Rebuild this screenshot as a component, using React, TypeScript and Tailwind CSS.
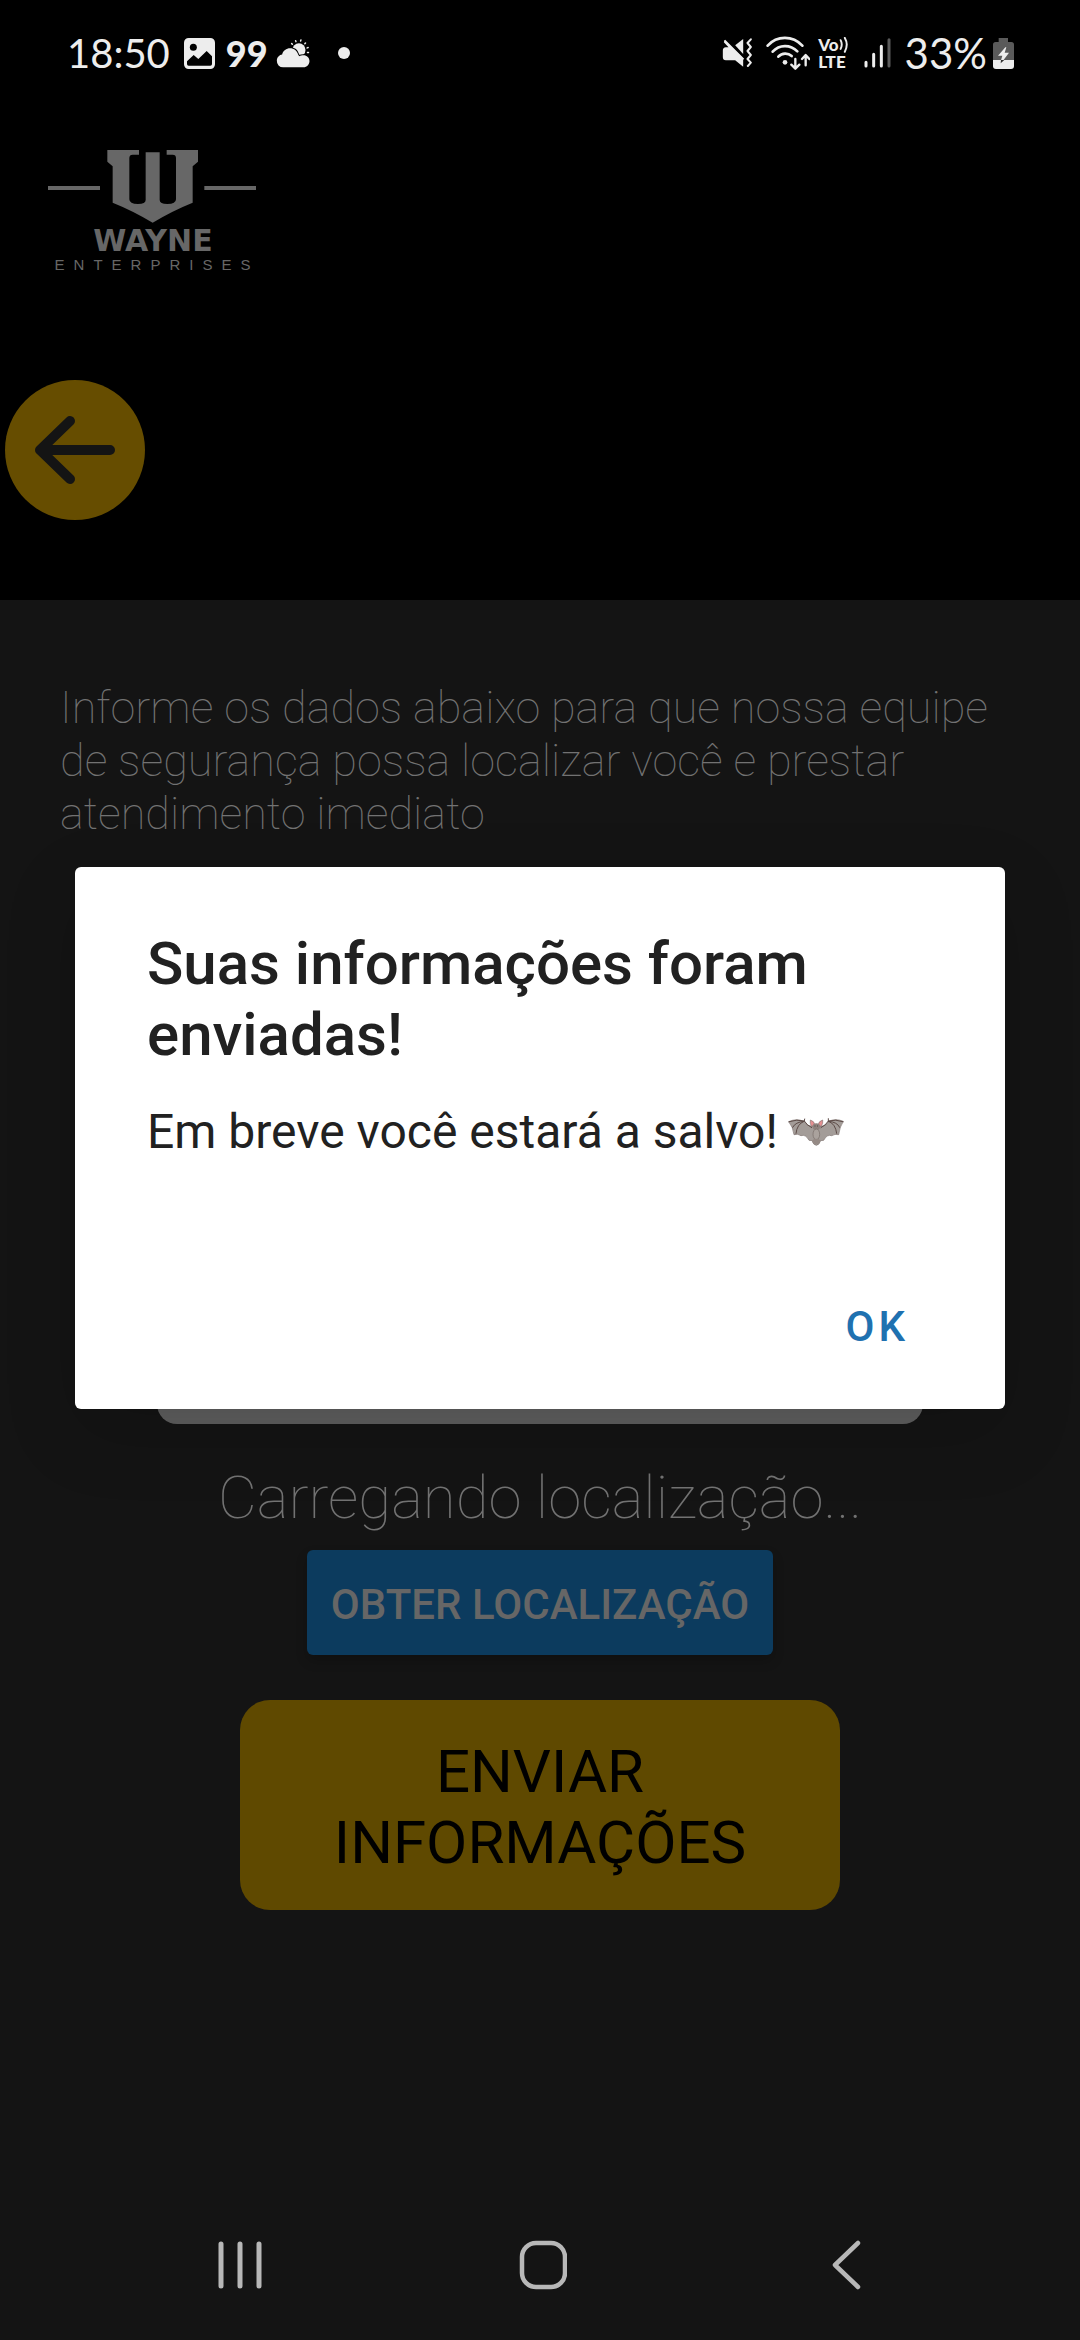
import React from "react";

function ImageIcon() {
  return (
    <svg viewBox="432 54 93 93" className="size-[31px]" aria-hidden="true">
      <path
        fill="#ededed"
        fillRule="evenodd"
        d="M446 54h65a14 14 0 0 1 14 14v65a14 14 0 0 1-14 14h-65a14 14 0 0 1-14-14V68a14 14 0 0 1 14-14ZM441 124v8q0 5 5 5h65q5 0 5-5v-23l-16-16-25 24-14-12Z"
      />
      <circle cx="460" cy="82" r="10.500" fill="#000" />
    </svg>
  );
}

function WeatherIcon() {
  return (
    <svg viewBox="709 55 102 88" className="h-[29px] w-[34px]" aria-hidden="true">
      <circle cx="778" cy="88" r="20" fill="#ededed" />
      <g stroke="#ededed" strokeWidth="4.500" strokeLinecap="round">
        <path d="M768 60l1 3M784 58l-1 3M798 67l-2 2M806 81l-3 1M807 96l-3 0M756 69l2 2" />
      </g>
      <path
        d="M730 141a19 19 0 0 1-19-20c0-11 8-18 16-19 3-12 13-19 24-19 12 0 22 8 25 20l3 4c3-2 8-3 13-3 10 0 18 8 18 18 0 11-8 19-18 19Z"
        fill="#ededed"
        stroke="#000"
        strokeWidth="6"
        paintOrder="stroke"
      />
    </svg>
  );
}

function MuteIcon() {
  return (
    <svg viewBox="62 54 92 90" className="h-[30px] w-[31px]" aria-hidden="true">
      <path d="M70 61l55 54v25L101 121H73q-9 0-9-9V91q0-8 9-9h8L67 67Z" fill="#ededed" />
      <path d="M125 57v45L101 76Z" fill="#ededed" />
      <path d="M69 61l57 57" stroke="#ededed" strokeWidth="6" />
      <path
        d="M148 58l-10 11 10 12-10 12 10 12-10 12 10 11-9 10"
        fill="none"
        stroke="#ededed"
        strokeWidth="6"
        strokeLinecap="round"
        strokeLinejoin="round"
      />
    </svg>
  );
}

function WifiIcon() {
  return (
    <svg viewBox="193 46 132 102" className="h-[34px] w-[44px]" aria-hidden="true">
      <g fill="none" stroke="#ededed" strokeWidth="8" strokeLinecap="round">
        <path d="M198 75C226 44 273 44 302 75" />
        <path d="M213 93C233 71 266 71 287 92" />
        <path d="M230 108C241 96 259 96 270 106" />
      </g>
      <circle cx="250" cy="125" r="7" fill="#ededed" />
      <g fill="none" stroke="#ededed" strokeWidth="7" strokeLinecap="round" strokeLinejoin="round">
        <path d="M281 115v28M269 132l12 12 12-12" />
        <path d="M312 134v-29M301 115l11-12 11 12" />
      </g>
    </svg>
  );
}

function VolteIcon() {
  return (
    <span className="flex flex-col text-[17px] leading-[17px] font-black">
      <span className="flex h-[17px] items-center">
        <span>Vo</span>
        <svg viewBox="412 54 34 48" className="h-4 w-[11px]" aria-hidden="true">
          <path
            d="M417 63q7 13 0 27M430 56q12 20 0 43"
            fill="none"
            stroke="#ededed"
            strokeWidth="6"
            strokeLinecap="round"
          />
        </svg>
      </span>
      <span>LTE</span>
    </span>
  );
}

function SignalIcon() {
  return (
    <svg viewBox="483 52 81 90" className="h-[30px] w-[27px]" aria-hidden="true">
      <g strokeWidth="9" strokeLinecap="round" stroke="#ededed">
        <path d="M489 125v11M512 101v35M535 77v59" />
        <path d="M558 57v79" stroke="#5a5a5a" />
      </g>
    </svg>
  );
}

function BatteryIcon() {
  return (
    <svg viewBox="876 51 63 93" className="h-[31px] w-[21px]" aria-hidden="true">
      <path d="M893 51h28v12h10q8 0 8 8v46h-63V71q0-8 8-8h9Z" fill="#5a5a5a" />
      <path d="M876 117h63v18q0 9-9 9h-45q-9 0-9-9Z" fill="#ededed" />
      <path d="M913 79l-22 25h13l-4 14h7l17-23h-13l5-16Z" fill="#ededed" />
      <path d="M900 117h10l-11 10Z" fill="#333" />
    </svg>
  );
}

function StatusBar() {
  return (
    <div className="flex h-[106px] items-center justify-between pr-[66px] pl-[67px] font-['Lato',sans-serif] text-[#ededed]">
      <div className="flex items-center">
        <span className="text-[40px] leading-none">18:50</span>
        <span className="ml-[14px] flex">
          <ImageIcon />
        </span>
        <span className="ml-[11px] text-[36px] leading-none font-black">99</span>
        <span className="ml-2 flex">
          <WeatherIcon />
        </span>
        <span className="ml-7 size-3 rounded-full bg-[#ededed]" />
      </div>
      <div className="flex items-center">
        <MuteIcon />
        <span className="ml-[13px] flex">
          <WifiIcon />
        </span>
        <span className="ml-2 flex">
          <VolteIcon />
        </span>
        <span className="ml-[14px] flex">
          <SignalIcon />
        </span>
        <span className="ml-[14px] text-[42px] leading-none">33%</span>
        <span className="ml-1.5 flex">
          <BatteryIcon />
        </span>
      </div>
    </div>
  );
}

function Logo() {
  return (
    <div className="ml-[46px] flex w-[214px] flex-col items-center text-[#676767]">
      <svg viewBox="48 60 642 219" className="h-[73px] w-[214px]" role="img" aria-label="Wayne Enterprises">
        <g fill="currentColor">
          <path d="M54 168h156v12H54ZM523 168h155v12H523Z" />
          <path d="M232 60h95v14h-19q-10 0-10 10v124q0 14 26 14 23 0 23-12V67h42v143q0 12 23 12 26 0 26-14V84q0-10-10-10h-18V60h94v35l-16 14v109q-60 24-120 60-60-36-120-60V109l-16-14Z" />
        </g>
      </svg>
      <span className="mt-1 font-['DejaVu_Sans',sans-serif] text-[30px] leading-7 font-bold">WAYNE</span>
      <span className="mt-0.5 pl-2 font-['Liberation_Sans',sans-serif] text-[15px] leading-4 tracking-[9px]">
        ENTERPRISES
      </span>
    </div>
  );
}

function BatIcon() {
  return (
    <svg viewBox="78 84 168 84" className="h-7 w-14" role="img" aria-label="morcego">
      <path
        d="M80 95Q104 84 125 94 134 108 149 109q13-7 28 0 15-1 23-15 21-10 44 0-11 16-14 40-11-3-21 3-14-5-24 14l-10 1q-2 12-12 14-10-2-12-14l-10-1q-10-19-24-14-10-7-21-3-3-24-16-39Z"
        fill="#a39c98"
        stroke="#7b706c"
        strokeWidth="2"
      />
      <g fill="none" stroke="#5c4a46" strokeWidth="3" strokeLinecap="round">
        <path d="M81 95Q105 87 127 93q8 13 22 20M128 87l-1 6M126 94q-21 8-24 36M126 94Q100 96 92 112" />
        <path d="M243 95q-22-8-44-2-8 13-22 20M199 86v7M200 94q21 8 24 36M200 94q26 2 33 18" />
      </g>
      <path d="M145 90q12 3 14 16l-11 3q-5-9-3-19ZM182 90q-12 3-14 16l10 3q6-9 4-19Z" fill="#e58f91" stroke="#857672" strokeWidth="2" />
      <ellipse cx="163" cy="110" rx="11" ry="10" fill="#8d827d" />
      <ellipse cx="163" cy="133" rx="10" ry="16" fill="#aaa29d" stroke="#756b67" strokeWidth="2" />
      <ellipse cx="163" cy="154" rx="12" ry="8" fill="#958a85" />
      <path d="M158 108h2M166 108h2" stroke="#332b29" strokeWidth="3" />
    </svg>
  );
}

function Dialog() {
  return (
    <div className="absolute inset-0 flex items-center px-[75px] pb-16">
      <div
        role="alertdialog"
        aria-modal="true"
        aria-labelledby="dialog-title"
        aria-describedby="dialog-message"
        className="flex w-full flex-col rounded-md bg-white px-[72px] pt-[61px] pb-[29px] text-[#212121] shadow-[0_24px_72px_rgba(0,0,0,0.15)]"
      >
        <h2 id="dialog-title" className="text-[60px] leading-[71px] font-medium">
          Suas informações foram enviadas!
        </h2>
        <p id="dialog-message" className="mt-[34px] flex items-center gap-2.5 text-[48px] leading-14">
          Em breve você estará a salvo! <BatIcon />
        </p>
        <button
          type="button"
          className="mt-28 mr-1 h-[108px] self-end px-5 text-[42px] font-medium tracking-[4px] text-[#1f71b0]"
        >
          OK
        </button>
      </div>
    </div>
  );
}

function NavigationBar() {
  return (
    <nav className="grid h-[150px] grid-cols-3 items-center pr-[82px] pl-[88px] text-[#b8b8b8]">
      <button type="button" aria-label="Recentes" className="flex justify-center">
        <svg viewBox="0 0 48 52" className="h-[52px] w-12">
          <path d="M5 5v42M24 5v42M43 5v42" stroke="currentColor" strokeWidth="5" strokeLinecap="round" />
        </svg>
      </button>
      <button type="button" aria-label="Início" className="flex justify-center">
        <svg viewBox="0 0 48 52" className="h-[52px] w-12">
          <rect x="3" y="4" width="43" height="44" rx="14" fill="none" stroke="currentColor" strokeWidth="4.500" />
        </svg>
      </button>
      <button type="button" aria-label="Voltar" className="flex justify-center">
        <svg viewBox="0 0 48 52" className="h-[52px] w-12">
          <path
            d="M36 4L13 26L36 48"
            fill="none"
            stroke="currentColor"
            strokeWidth="4.500"
            strokeLinecap="round"
            strokeLinejoin="round"
          />
        </svg>
      </button>
    </nav>
  );
}

export default function App() {
  return (
    <div className="relative flex min-h-screen flex-col bg-[#141414] font-['Roboto',sans-serif]">
      <header className="flex h-[600px] flex-col bg-black">
        <StatusBar />
        <div className="pt-11">
          <Logo />
        </div>
        <button
          type="button"
          aria-label="Voltar à tela anterior"
          className="mt-auto mb-20 ml-[5px] flex size-[140px] items-center justify-center rounded-full bg-[#664d00]"
        >
          <svg viewBox="0 0 140 140" className="size-full">
            <path
              d="M105 70H36M65 41L35 70L65 99"
              fill="none"
              stroke="#141414"
              strokeWidth="10"
              strokeLinecap="round"
              strokeLinejoin="round"
            />
          </svg>
        </button>
      </header>

      <main className="flex grow flex-col items-center">
        <p className="w-full px-[60px] pt-[81px] text-[45px] leading-[53px] font-thin text-[#727272]">
          Informe os dados abaixo para que nossa equipe de segurança possa localizar você e prestar atendimento imediato
        </p>
        <div className="mt-[63px] h-[521px] w-[71%] rounded-[20px] bg-[#5f5f5f]" />
        <p className="mt-[38px] text-[60px] leading-[71px] font-thin text-[#727272]">Carregando localização...</p>
        <button
          type="button"
          className="mt-[17px] h-[105px] rounded-md bg-[#0c3b5e] px-6 pt-1 text-[42px] font-medium text-[#666666] shadow-[0_6px_12px_rgba(0,0,0,0.2)]"
        >
          OBTER LOCALIZAÇÃO
        </button>
        <button
          type="button"
          className="mt-[45px] w-[600px] rounded-[30px] bg-[#5f4900] px-16 pt-9 pb-8 text-[60px] leading-[71px] text-black"
        >
          ENVIAR INFORMAÇÕES
        </button>
      </main>

      <NavigationBar />
      <Dialog />
    </div>
  );
}
